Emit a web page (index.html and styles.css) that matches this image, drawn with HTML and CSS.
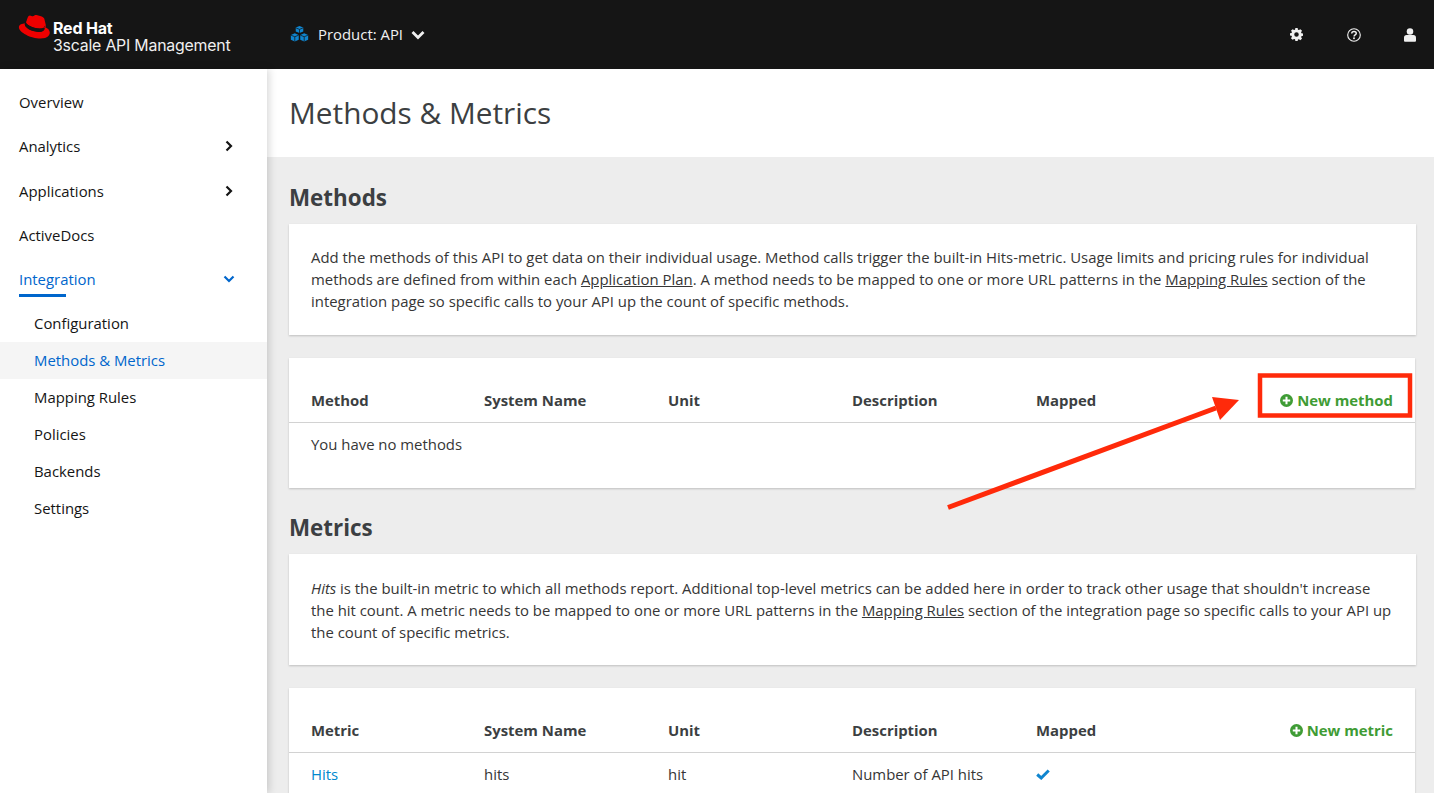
FILE: index.html
```html
<!DOCTYPE html>
<html lang="en">
<head>
<meta charset="utf-8">
<title>Methods &amp; Metrics</title>
<link rel="stylesheet" href="styles.css">
</head>
<body>
<header class="topbar">
  <div class="brand">
    <svg class="hat" viewBox="0 0 34 24" width="34" height="24"><path fill="#e00" d="M22.500 13.800c2.200 0 5.400-.5 5.400-3.100 0-.2 0-.4-.1-.6L26.500 4.500C26.200 3.300 25.900 2.700 23.700 1.600 22 .7 18.300 0 17.300 0c-1 0-1.300 1.300-2.400 1.300-1.100 0-1.900-.9-3-.9-1 0-1.700.7-2.200 2.100 0 0-1.400 4.100-1.600 4.700v.4c0 1.700 6.700 6.200 14.400 6.200z"/><path fill="#e00" d="M29.700 11.800c.3 1.300.3 1.400.3 1.600 0 2.200-2.500 3.500-5.800 3.500C16.700 16.900 10.300 12.500 10.300 9.600c0-.4.100-.8.300-1.200C7.900 8.600 4.400 9.100 4.400 12.200 4.400 17.300 16.500 23.600 26 23.600c7.400 0 9.300-3.300 9.300-6 0-2.100-1.800-4.500-5.600-5.800z" transform="translate(-3.500)"/><path fill="#151515" d="M26.200 11.800c.3 1.300.3 1.400.3 1.600 0 2.200-2.500 3.500-5.800 3.500-7.500 0-13.900-4.400-13.900-7.300 0-.4.100-.8.300-1.200l.6-1.600-.1.400c0 1.700 6.700 6.200 14.400 6.200 2.200 0 5.400-.5 5.400-3.100z"/></svg>
    <div class="brand-text">
      <span class="brand-name">Red Hat</span>
      <span class="brand-sub">3scale API Management</span>
    </div>
  </div>
  <div class="context">
    <svg class="cubes" viewBox="0 0 20 17" width="19" height="16"><path fill="#0f85cf" d="M10 0l4 1.700v4.100L10 7.500 6 5.800V1.700zM5 7.800l4.200 1.700v5.200L5 16.500.8 14.700V9.500zM15 7.800l4.200 1.700v5.200L15 16.500l-4.200-1.800V9.500z"/><path fill="none" stroke="#151515" stroke-width=".8" d="M6 1.900l4 1.700 4-1.700M10 3.600v3.900M.8 9.700L5 11.400l4.200-1.700M5 11.400v5M10.800 9.700l4.200 1.700 4.200-1.700M15 11.400v5"/></svg>
    <span class="context-label">Product: API</span>
    <svg class="context-caret" viewBox="0 0 14 10" width="14" height="10"><path fill="none" stroke="#f0f0f0" stroke-width="2.800" d="M1.500 2l5.500 5.500L12.500 2"/></svg>
  </div>
  <div class="tools">
    <svg class="tool-gear" viewBox="0 0 16 16" width="13" height="13"><path fill="#f0f0f0" fill-rule="evenodd" d="M6.600 0h2.800l.4 2.100 1.200.5L12.800 1.400l2 2-1.200 1.800.5 1.200 2.100.4v2.800l-2.100.4-.5 1.200 1.200 1.800-2 2-1.800-1.200-1.200.5L9.400 16H6.600l-.4-2.100-1.200-.5-1.800 1.200-2-2 1.200-1.800-.5-1.200L-.2 9.200V6.400l2.100-.4.5-1.200L1.200 3.400l2-2L5 2.600l1.200-.5zM8 5.200a2.800 2.800 0 1 0 0 5.600 2.800 2.800 0 0 0 0-5.600z"/></svg>
    <svg viewBox="0 0 16 16" width="14" height="14"><circle cx="8" cy="8" r="7.200" fill="none" stroke="#f0f0f0" stroke-width="1.300"/><path fill="none" stroke="#f0f0f0" stroke-width="1.700" d="M5.400 6.200C5.500 4.700 6.600 4 8 4c1.500 0 2.600.8 2.600 2.100 0 1.800-2.500 1.800-2.500 3.500"/><circle cx="8" cy="11.700" r="1.100" fill="#f0f0f0"/></svg>
    <svg viewBox="0 0 14 16" width="12" height="14"><circle cx="7" cy="4" r="3.800" fill="#f0f0f0"/><path fill="#f0f0f0" d="M3 8h8c1.800 0 3 1.300 3 3v3.500c0 .9-.6 1.500-1.500 1.500h-11C.6 16 0 15.400 0 14.500V11c0-1.700 1.200-3 3-3z"/></svg>
  </div>
</header>
<div class="shell">
  <nav class="sidebar">
    <a class="nav-item">Overview</a>
    <a class="nav-item">Analytics<svg class="chev" viewBox="0 0 10 12" width="10" height="12"><path fill="none" stroke="#151515" stroke-width="2.200" d="M2.500 1.500L7 6l-4.500 4.500"/></svg></a>
    <a class="nav-item">Applications<svg class="chev" viewBox="0 0 10 12" width="10" height="12"><path fill="none" stroke="#151515" stroke-width="2.200" d="M2.500 1.500L7 6l-4.500 4.500"/></svg></a>
    <a class="nav-item">ActiveDocs</a>
    <a class="nav-item nav-current"><span class="nav-underlined">Integration</span><svg class="chev chev-down" viewBox="0 0 12 10" width="12" height="10"><path fill="none" stroke="#06c" stroke-width="2.200" d="M1.500 2.500L6 7l4.500-4.500"/></svg></a>
    <div class="subnav">
      <a class="sub-item">Configuration</a>
      <a class="sub-item sub-current">Methods &amp; Metrics</a>
      <a class="sub-item">Mapping Rules</a>
      <a class="sub-item">Policies</a>
      <a class="sub-item">Backends</a>
      <a class="sub-item">Settings</a>
    </div>
  </nav>
  <main class="main">
    <div class="page-title"><h1>Methods &amp; Metrics</h1></div>
    <div class="content">
      <h2>Methods</h2>
      <section class="card text-card">
        <p>Add the methods of this API to get data on their individual usage. Method calls trigger the built-in Hits-metric. Usage limits and pricing rules for individual methods are defined from within each <u>Application Plan</u>. A method needs to be mapped to one or more URL patterns in the <u>Mapping Rules</u> section of the integration page so specific calls to your API up the count of specific methods.</p>
      </section>
      <section class="card table-card">
        <div class="row head-row">
          <span class="c1">Method</span><span class="c2">System Name</span><span class="c3">Unit</span><span class="c4">Description</span><span class="c5">Mapped</span>
          <a class="add"><svg viewBox="0 0 14 14" width="13" height="13"><circle cx="7" cy="7" r="7" fill="#3f9c35"/><path stroke="#fff" stroke-width="2.200" d="M7 3v8M3 7h8"/></svg>New method</a>
        </div>
        <div class="row empty-row">You have no methods</div>
      </section>
      <h2 class="h-metrics">Metrics</h2>
      <section class="card text-card text-card-metrics">
        <p><em>Hits</em> is the built-in metric to which all methods report. Additional top-level metrics can be added here in order to track other usage that shouldn't increase the hit count. A metric needs to be mapped to one or more URL patterns in the <u>Mapping Rules</u> section of the integration page so specific calls to your API up the count of specific metrics.</p>
      </section>
      <section class="card table-card">
        <div class="row head-row">
          <span class="c1">Metric</span><span class="c2">System Name</span><span class="c3">Unit</span><span class="c4">Description</span><span class="c5">Mapped</span>
          <a class="add"><svg viewBox="0 0 14 14" width="13" height="13"><circle cx="7" cy="7" r="7" fill="#3f9c35"/><path stroke="#fff" stroke-width="2.200" d="M7 3v8M3 7h8"/></svg>New metric</a>
        </div>
        <div class="row body-row">
          <a class="c1 link">Hits</a><span class="c2">hits</span><span class="c3">hit</span><span class="c4">Number of API hits</span>
          <span class="c5"><svg viewBox="0 0 14 11" width="14" height="11"><path fill="none" stroke="#0f85cf" stroke-width="3" d="M1.200 5.500l4 3.500 7.500-7.500"/></svg></span>
        </div>
      </section>
    </div>
  </main>
</div>
<svg class="annotation" viewBox="0 0 1434 793" width="1434" height="793">
  <rect x="1260" y="375.500" width="150" height="40" fill="none" stroke="#ff2a0a" stroke-width="4.500"/>
  <path d="M948 507.500L1216 408" stroke="#ff2a0a" stroke-width="5" fill="none"/>
  <path fill="#ff2a0a" d="M1212 397L1239 400 1220 420z"/>
</svg>
</body>
</html>
```
FILE: styles.css
```css
* { box-sizing: border-box; }
html, body { margin: 0; height: 793px; overflow: hidden; }
body { font-family: "Open Sans", sans-serif; font-size: 14.900px; color: #151515; background: #fff; position: relative; }

.topbar { height: 69px; background: #151515; display: flex; align-items: center; padding: 0 18px; color: #f0f0f0; }
.brand { width: 272px; display: flex; align-items: center; gap: 1px; }
.hat { margin-top: -15px; }
.brand-text { display: flex; flex-direction: column; line-height: 17px; color: #fff; padding-top: 4px; }
.brand-name { font-family: "Inter", sans-serif; font-weight: 700; font-size: 16px; letter-spacing: -0.2px; }
.brand-sub { font-family: "Inter", sans-serif; font-size: 15.850px; letter-spacing: -0.2px; color: #f0f0f0; }
.context { display: flex; align-items: center; margin-top: -1px; }
.cubes { margin-right: 9px; }
.context-label { margin-right: 8px; }
.context-caret { margin-top: 1px; }
.tools { margin-left: auto; display: flex; align-items: center; gap: 43px; }
.tool-gear { margin-right: 1px; }

.shell { display: flex; height: 724px; }
.sidebar { width: 267px; flex: none; background: #fff; box-shadow: 2px 0 8px rgba(3,3,3,.16); position: relative; padding-top: 10.700px; }
.nav-item { height: 44.400px; display: flex; align-items: center; justify-content: space-between; padding: 0 33px 0 19px; }
.chev-down { margin-right: -1px; }
.nav-current { color: #06c; }
.nav-underlined { position: relative; }
.nav-underlined::after { content: ""; position: absolute; left: 0; top: 25px; width: 47px; height: 3px; background: #06c; }
.subnav { display: flex; flex-direction: column; padding-top: 3.300px; }
.sub-item { height: 37px; display: flex; align-items: center; padding-left: 34px; }
.sub-current { color: #06c; background: #f5f5f5; }

.main { flex: 1; background: #ededed; min-width: 0; }
.page-title { height: 88px; background: #fff; display: flex; align-items: center; padding: 0 0 2px 22px; }
h1 { margin: 0; font-weight: 400; font-size: 29.800px; color: #3c3f42; }
.content { padding: 0 18px 0 22px; }
h2 { margin: 0; font-size: 22.400px; font-weight: 700; color: #3c3f42; height: 67px; line-height: 81px; }
.h-metrics { height: 66px; line-height: 79px; }
.card { background: #fff; box-shadow: 0 1px 2px rgba(3,3,3,.2); }
.text-card { height: 111px; margin-bottom: 23px; padding: 22px 22px 0; }
.text-card-metrics { padding-top: 23px; }
.text-card p { margin: 0; line-height: 22px; color: #363636; }
.table-card { width: 1126px; height: 130px; }
.row { display: flex; padding: 0 22px; position: relative; }
.head-row { height: 65px; align-items: flex-end; padding-bottom: 12px; border-bottom: 1px solid #d2d2d2; font-weight: 700; color: #3c3f42; }
.empty-row { height: 44px; align-items: center; padding-bottom: 2px; color: #363636; }
.body-row { height: 44px; align-items: center; padding-bottom: 2px; color: #363636; }
.c1 { width: 173px; }
.c2, .c3, .c4, .c5 { width: 184px; }
.link { color: #0088ce; }
.add { margin-left: auto; color: #3f9c35; display: flex; align-items: center; gap: 4px; font-weight: 700; }
.annotation { position: absolute; left: 0; top: 0; pointer-events: none; }
```
